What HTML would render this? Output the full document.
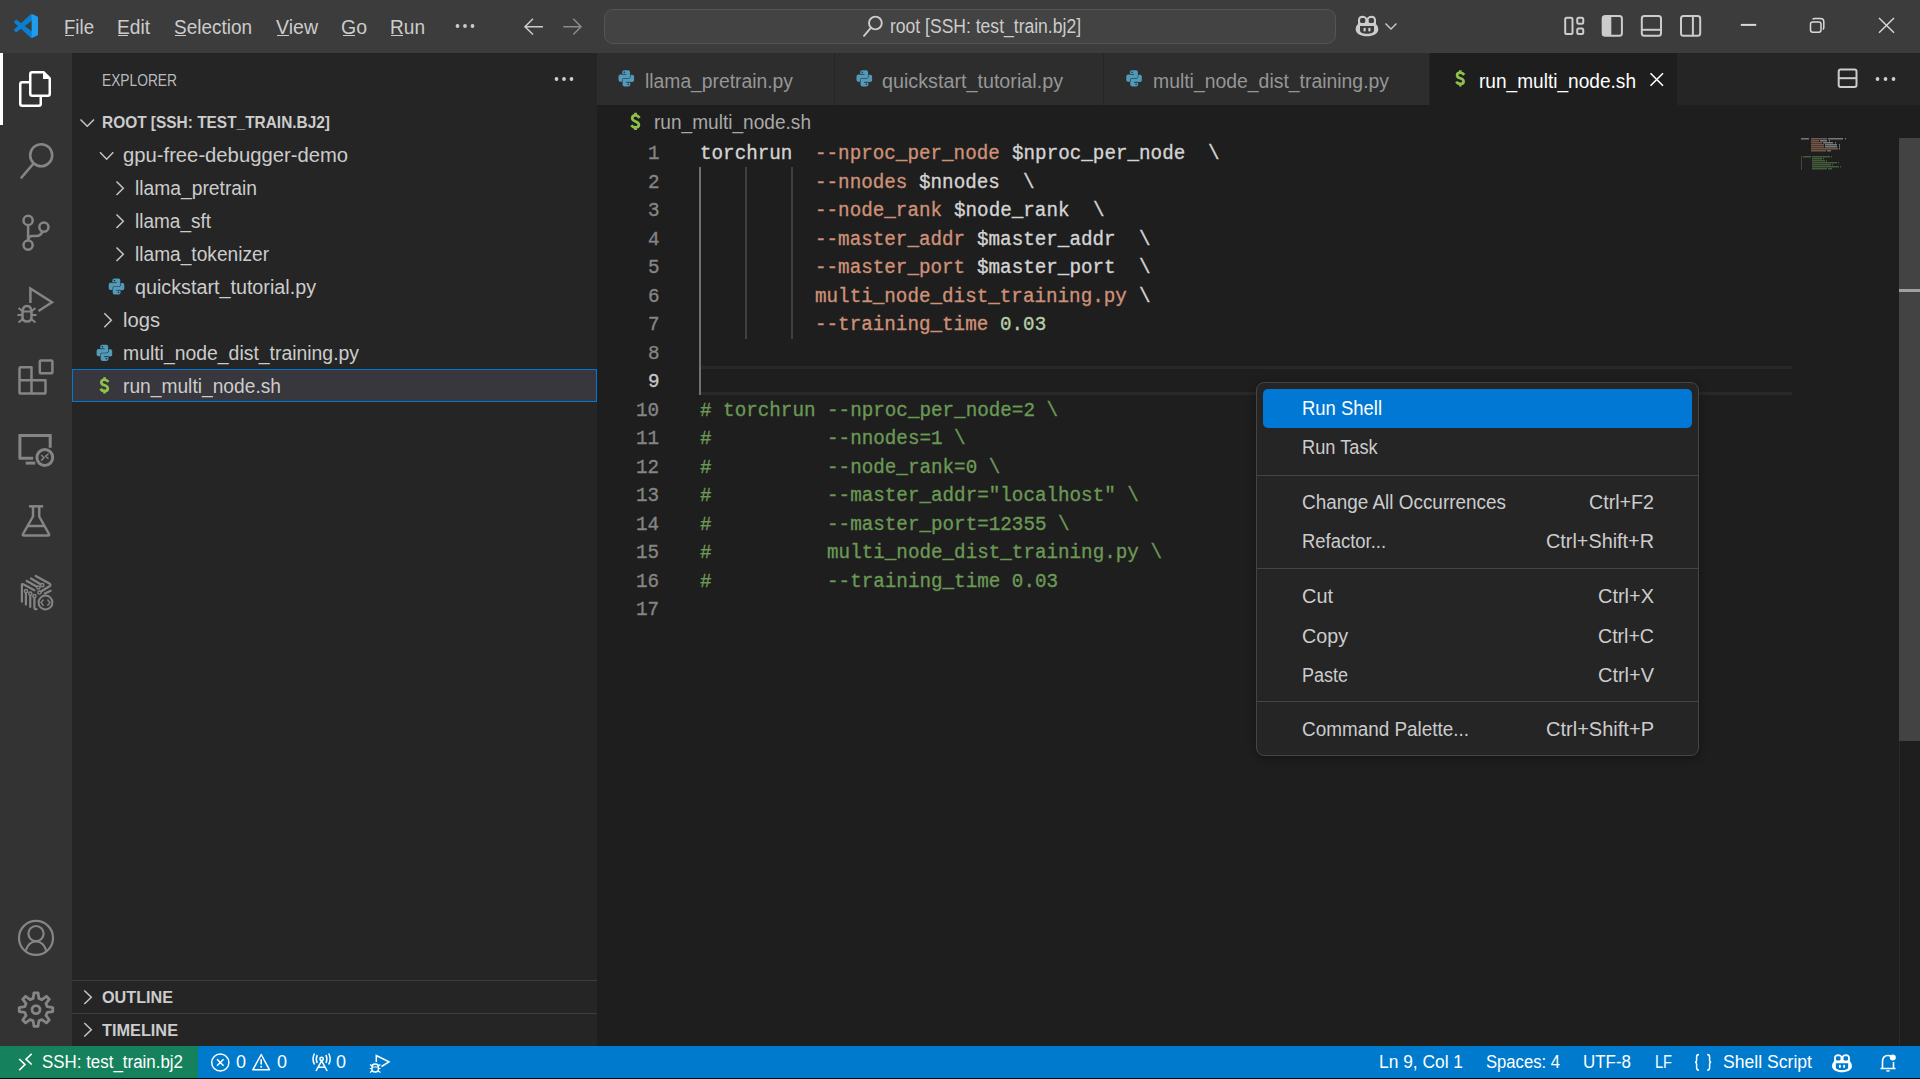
<!DOCTYPE html>
<html><head><meta charset="utf-8"><style>
html,body{margin:0;padding:0;width:1920px;height:1079px;overflow:hidden;background:#1e1e1e;}
body{position:relative;font-family:'Liberation Sans', sans-serif;}
svg{overflow:visible}
</style></head><body>
<div style="position:absolute;left:0px;top:0px;width:1920px;height:53px;background:#3c3c3c;"></div>
<div style="position:absolute;left:0px;top:53px;width:72px;height:993px;background:#333333;"></div>
<div style="position:absolute;left:72px;top:53px;width:525px;height:993px;background:#252526;"></div>
<div style="position:absolute;left:597px;top:53px;width:1323px;height:993px;background:#1e1e1e;"></div>
<div style="position:absolute;left:597px;top:53px;width:1323px;height:52px;background:#252526;"></div>
<div style="position:absolute;left:0px;top:1046px;width:1920px;height:33px;background:#007acc;"></div>
<div style="position:absolute;left:0px;top:1046px;width:198px;height:33px;background:#16825d;"></div>
<div style="position:absolute;left:64px;top:17.69px;font-family:'Liberation Sans', sans-serif;font-size:19.5px;line-height:1;white-space:pre;color:#cccccc;font-weight:400;transform:scaleX(0.9548);transform-origin:0 0;">File</div>
<div style="position:absolute;left:117px;top:17.69px;font-family:'Liberation Sans', sans-serif;font-size:19.5px;line-height:1;white-space:pre;color:#cccccc;font-weight:400;transform:scaleX(0.9821);transform-origin:0 0;">Edit</div>
<div style="position:absolute;left:174px;top:17.69px;font-family:'Liberation Sans', sans-serif;font-size:19.5px;line-height:1;white-space:pre;color:#cccccc;font-weight:400;transform:scaleX(0.9723);transform-origin:0 0;">Selection</div>
<div style="position:absolute;left:276px;top:17.69px;font-family:'Liberation Sans', sans-serif;font-size:19.5px;line-height:1;white-space:pre;color:#cccccc;font-weight:400;transform:scaleX(1.0021);transform-origin:0 0;">View</div>
<div style="position:absolute;left:341px;top:17.69px;font-family:'Liberation Sans', sans-serif;font-size:19.5px;line-height:1;white-space:pre;color:#cccccc;font-weight:400;transform:scaleX(0.9995);transform-origin:0 0;">Go</div>
<div style="position:absolute;left:390px;top:17.69px;font-family:'Liberation Sans', sans-serif;font-size:19.5px;line-height:1;white-space:pre;color:#cccccc;font-weight:400;transform:scaleX(0.9784);transform-origin:0 0;">Run</div>
<div style="position:absolute;left:604px;top:9px;width:732px;height:35px;background:#434343;border:1px solid #555;border-radius:9px;box-sizing:border-box;"></div>
<div style="position:absolute;left:890px;top:16.99px;font-family:'Liberation Sans', sans-serif;font-size:19.5px;line-height:1;white-space:pre;color:#cccccc;font-weight:400;transform:scaleX(0.8991);transform-origin:0 0;">root [SSH: test_train.bj2]</div>
<div style="position:absolute;left:0px;top:53px;width:3px;height:72px;background:#ffffff;"></div>
<div style="position:absolute;left:101.5px;top:72.03px;font-family:'Liberation Sans', sans-serif;font-size:16.5px;line-height:1;white-space:pre;color:#bbbbbb;font-weight:400;transform:scaleX(0.8346);transform-origin:0 0;">EXPLORER</div>
<div style="position:absolute;left:101.5px;top:114.03px;font-family:'Liberation Sans', sans-serif;font-size:16.5px;line-height:1;white-space:pre;color:#cccccc;font-weight:700;transform:scaleX(0.9350);transform-origin:0 0;">ROOT [SSH: TEST_TRAIN.BJ2]</div>
<div style="position:absolute;left:72px;top:369px;width:525px;height:33px;background:#37373d;border:1px solid #0078d4;box-sizing:border-box;"></div>
<div style="position:absolute;left:123px;top:146.29px;font-family:'Liberation Sans', sans-serif;font-size:19.5px;line-height:1;white-space:pre;color:#cccccc;font-weight:400;transform:scaleX(1.0378);transform-origin:0 0;">gpu-free-debugger-demo</div>
<div style="position:absolute;left:135px;top:179.29px;font-family:'Liberation Sans', sans-serif;font-size:19.5px;line-height:1;white-space:pre;color:#cccccc;font-weight:400;transform:scaleX(0.9874);transform-origin:0 0;">llama_pretrain</div>
<div style="position:absolute;left:135px;top:212.29px;font-family:'Liberation Sans', sans-serif;font-size:19.5px;line-height:1;white-space:pre;color:#cccccc;font-weight:400;transform:scaleX(0.9740);transform-origin:0 0;">llama_sft</div>
<div style="position:absolute;left:135px;top:245.29px;font-family:'Liberation Sans', sans-serif;font-size:19.5px;line-height:1;white-space:pre;color:#cccccc;font-weight:400;transform:scaleX(0.9812);transform-origin:0 0;">llama_tokenizer</div>
<div style="position:absolute;left:135px;top:278.29px;font-family:'Liberation Sans', sans-serif;font-size:19.5px;line-height:1;white-space:pre;color:#cccccc;font-weight:400;transform:scaleX(1.0121);transform-origin:0 0;">quickstart_tutorial.py</div>
<div style="position:absolute;left:123px;top:311.29px;font-family:'Liberation Sans', sans-serif;font-size:19.5px;line-height:1;white-space:pre;color:#cccccc;font-weight:400;transform:scaleX(1.0343);transform-origin:0 0;">logs</div>
<div style="position:absolute;left:123px;top:344.29px;font-family:'Liberation Sans', sans-serif;font-size:19.5px;line-height:1;white-space:pre;color:#cccccc;font-weight:400;transform:scaleX(0.9941);transform-origin:0 0;">multi_node_dist_training.py</div>
<div style="position:absolute;left:123px;top:377.29px;font-family:'Liberation Sans', sans-serif;font-size:19.5px;line-height:1;white-space:pre;color:#cccccc;font-weight:400;transform:scaleX(0.9848);transform-origin:0 0;">run_multi_node.sh</div>
<div style="position:absolute;left:72px;top:980px;width:525px;height:1px;background:#3c3c3c;"></div>
<div style="position:absolute;left:72px;top:1013px;width:525px;height:1px;background:#3c3c3c;"></div>
<div style="position:absolute;left:101.5px;top:989.03px;font-family:'Liberation Sans', sans-serif;font-size:16.5px;line-height:1;white-space:pre;color:#cccccc;font-weight:700;transform:scaleX(0.9805);transform-origin:0 0;">OUTLINE</div>
<div style="position:absolute;left:101.5px;top:1022.03px;font-family:'Liberation Sans', sans-serif;font-size:16.5px;line-height:1;white-space:pre;color:#cccccc;font-weight:700;transform:scaleX(0.9870);transform-origin:0 0;">TIMELINE</div>
<div style="position:absolute;left:597px;top:53px;width:238px;height:52px;background:#2d2d2d;border-right:1px solid #252526;box-sizing:border-box;"></div>
<div style="position:absolute;left:835px;top:53px;width:269px;height:52px;background:#2d2d2d;border-right:1px solid #252526;box-sizing:border-box;"></div>
<div style="position:absolute;left:1104px;top:53px;width:326px;height:52px;background:#2d2d2d;border-right:1px solid #252526;box-sizing:border-box;"></div>
<div style="position:absolute;left:1430px;top:53px;width:247px;height:52px;background:#1e1e1e;"></div>
<div style="position:absolute;left:645px;top:71.99px;font-family:'Liberation Sans', sans-serif;font-size:19.5px;line-height:1;white-space:pre;color:#969696;font-weight:400;transform:scaleX(0.9895);transform-origin:0 0;">llama_pretrain.py</div>
<div style="position:absolute;left:882px;top:71.99px;font-family:'Liberation Sans', sans-serif;font-size:19.5px;line-height:1;white-space:pre;color:#969696;font-weight:400;transform:scaleX(1.0121);transform-origin:0 0;">quickstart_tutorial.py</div>
<div style="position:absolute;left:1153px;top:71.99px;font-family:'Liberation Sans', sans-serif;font-size:19.5px;line-height:1;white-space:pre;color:#969696;font-weight:400;transform:scaleX(0.9941);transform-origin:0 0;">multi_node_dist_training.py</div>
<div style="position:absolute;left:1478.5px;top:71.99px;font-family:'Liberation Sans', sans-serif;font-size:19.5px;line-height:1;white-space:pre;color:#ffffff;font-weight:400;transform:scaleX(0.9786);transform-origin:0 0;">run_multi_node.sh</div>
<div style="position:absolute;left:654px;top:112.99px;font-family:'Liberation Sans', sans-serif;font-size:19.5px;line-height:1;white-space:pre;color:#a9a9a9;font-weight:400;transform:scaleX(0.9786);transform-origin:0 0;">run_multi_node.sh</div>
<div style="position:absolute;left:701px;top:366px;width:1091px;height:28.8px;background:transparent;border-top:3px solid #282828;border-bottom:3px solid #282828;box-sizing:border-box;"></div>
<div style="position:absolute;left:745px;top:167.0px;width:1.6px;height:29.0px;background:#404040;"></div>
<div style="position:absolute;left:791px;top:167.0px;width:1.6px;height:29.0px;background:#404040;"></div>
<div style="position:absolute;left:745px;top:195.5px;width:1.6px;height:29.0px;background:#404040;"></div>
<div style="position:absolute;left:791px;top:195.5px;width:1.6px;height:29.0px;background:#404040;"></div>
<div style="position:absolute;left:745px;top:224.0px;width:1.6px;height:29.0px;background:#404040;"></div>
<div style="position:absolute;left:791px;top:224.0px;width:1.6px;height:29.0px;background:#404040;"></div>
<div style="position:absolute;left:745px;top:252.5px;width:1.6px;height:29.0px;background:#404040;"></div>
<div style="position:absolute;left:791px;top:252.5px;width:1.6px;height:29.0px;background:#404040;"></div>
<div style="position:absolute;left:745px;top:281.0px;width:1.6px;height:29.0px;background:#404040;"></div>
<div style="position:absolute;left:791px;top:281.0px;width:1.6px;height:29.0px;background:#404040;"></div>
<div style="position:absolute;left:745px;top:309.5px;width:1.6px;height:29.0px;background:#404040;"></div>
<div style="position:absolute;left:791px;top:309.5px;width:1.6px;height:29.0px;background:#404040;"></div>
<div style="position:absolute;left:699px;top:167.0px;width:2px;height:228.0px;background:#707070;"></div>
<div style="position:absolute;left:647.953px;top:144.09px;font-family:'Liberation Mono', monospace;font-size:20.5px;line-height:1;white-space:pre;color:#858585;font-weight:400;transform:scaleX(0.9388);transform-origin:0 0;-webkit-text-stroke:0.35px #858585;">1</div>
<div style="position:absolute;left:700.0px;top:144.09px;font-family:'Liberation Mono', monospace;font-size:20.5px;line-height:1;white-space:pre;color:#d4d4d4;font-weight:400;transform:scaleX(0.9388);transform-origin:0 0;-webkit-text-stroke:0.35px #d4d4d4;">torchrun</div>
<div style="position:absolute;left:815.47px;top:144.09px;font-family:'Liberation Mono', monospace;font-size:20.5px;line-height:1;white-space:pre;color:#ce9178;font-weight:400;transform:scaleX(0.9388);transform-origin:0 0;-webkit-text-stroke:0.35px #ce9178;">--nproc_per_node</div>
<div style="position:absolute;left:1011.769px;top:144.09px;font-family:'Liberation Mono', monospace;font-size:20.5px;line-height:1;white-space:pre;color:#d4d4d4;font-weight:400;transform:scaleX(0.9388);transform-origin:0 0;-webkit-text-stroke:0.35px #d4d4d4;">$nproc_per_node</div>
<div style="position:absolute;left:1208.068px;top:144.09px;font-family:'Liberation Mono', monospace;font-size:20.5px;line-height:1;white-space:pre;color:#d4d4d4;font-weight:400;transform:scaleX(0.9388);transform-origin:0 0;-webkit-text-stroke:0.35px #d4d4d4;">\</div>
<div style="position:absolute;left:647.953px;top:172.59px;font-family:'Liberation Mono', monospace;font-size:20.5px;line-height:1;white-space:pre;color:#858585;font-weight:400;transform:scaleX(0.9388);transform-origin:0 0;-webkit-text-stroke:0.35px #858585;">2</div>
<div style="position:absolute;left:815.47px;top:172.59px;font-family:'Liberation Mono', monospace;font-size:20.5px;line-height:1;white-space:pre;color:#ce9178;font-weight:400;transform:scaleX(0.9388);transform-origin:0 0;-webkit-text-stroke:0.35px #ce9178;">--nnodes</div>
<div style="position:absolute;left:919.393px;top:172.59px;font-family:'Liberation Mono', monospace;font-size:20.5px;line-height:1;white-space:pre;color:#d4d4d4;font-weight:400;transform:scaleX(0.9388);transform-origin:0 0;-webkit-text-stroke:0.35px #d4d4d4;">$nnodes</div>
<div style="position:absolute;left:1023.316px;top:172.59px;font-family:'Liberation Mono', monospace;font-size:20.5px;line-height:1;white-space:pre;color:#d4d4d4;font-weight:400;transform:scaleX(0.9388);transform-origin:0 0;-webkit-text-stroke:0.35px #d4d4d4;">\</div>
<div style="position:absolute;left:647.953px;top:201.09px;font-family:'Liberation Mono', monospace;font-size:20.5px;line-height:1;white-space:pre;color:#858585;font-weight:400;transform:scaleX(0.9388);transform-origin:0 0;-webkit-text-stroke:0.35px #858585;">3</div>
<div style="position:absolute;left:815.47px;top:201.09px;font-family:'Liberation Mono', monospace;font-size:20.5px;line-height:1;white-space:pre;color:#ce9178;font-weight:400;transform:scaleX(0.9388);transform-origin:0 0;-webkit-text-stroke:0.35px #ce9178;">--node_rank</div>
<div style="position:absolute;left:954.034px;top:201.09px;font-family:'Liberation Mono', monospace;font-size:20.5px;line-height:1;white-space:pre;color:#d4d4d4;font-weight:400;transform:scaleX(0.9388);transform-origin:0 0;-webkit-text-stroke:0.35px #d4d4d4;">$node_rank</div>
<div style="position:absolute;left:1092.598px;top:201.09px;font-family:'Liberation Mono', monospace;font-size:20.5px;line-height:1;white-space:pre;color:#d4d4d4;font-weight:400;transform:scaleX(0.9388);transform-origin:0 0;-webkit-text-stroke:0.35px #d4d4d4;">\</div>
<div style="position:absolute;left:647.953px;top:229.59px;font-family:'Liberation Mono', monospace;font-size:20.5px;line-height:1;white-space:pre;color:#858585;font-weight:400;transform:scaleX(0.9388);transform-origin:0 0;-webkit-text-stroke:0.35px #858585;">4</div>
<div style="position:absolute;left:815.47px;top:229.59px;font-family:'Liberation Mono', monospace;font-size:20.5px;line-height:1;white-space:pre;color:#ce9178;font-weight:400;transform:scaleX(0.9388);transform-origin:0 0;-webkit-text-stroke:0.35px #ce9178;">--master_addr</div>
<div style="position:absolute;left:977.128px;top:229.59px;font-family:'Liberation Mono', monospace;font-size:20.5px;line-height:1;white-space:pre;color:#d4d4d4;font-weight:400;transform:scaleX(0.9388);transform-origin:0 0;-webkit-text-stroke:0.35px #d4d4d4;">$master_addr</div>
<div style="position:absolute;left:1138.786px;top:229.59px;font-family:'Liberation Mono', monospace;font-size:20.5px;line-height:1;white-space:pre;color:#d4d4d4;font-weight:400;transform:scaleX(0.9388);transform-origin:0 0;-webkit-text-stroke:0.35px #d4d4d4;">\</div>
<div style="position:absolute;left:647.953px;top:258.09px;font-family:'Liberation Mono', monospace;font-size:20.5px;line-height:1;white-space:pre;color:#858585;font-weight:400;transform:scaleX(0.9388);transform-origin:0 0;-webkit-text-stroke:0.35px #858585;">5</div>
<div style="position:absolute;left:815.47px;top:258.09px;font-family:'Liberation Mono', monospace;font-size:20.5px;line-height:1;white-space:pre;color:#ce9178;font-weight:400;transform:scaleX(0.9388);transform-origin:0 0;-webkit-text-stroke:0.35px #ce9178;">--master_port</div>
<div style="position:absolute;left:977.128px;top:258.09px;font-family:'Liberation Mono', monospace;font-size:20.5px;line-height:1;white-space:pre;color:#d4d4d4;font-weight:400;transform:scaleX(0.9388);transform-origin:0 0;-webkit-text-stroke:0.35px #d4d4d4;">$master_port</div>
<div style="position:absolute;left:1138.786px;top:258.09px;font-family:'Liberation Mono', monospace;font-size:20.5px;line-height:1;white-space:pre;color:#d4d4d4;font-weight:400;transform:scaleX(0.9388);transform-origin:0 0;-webkit-text-stroke:0.35px #d4d4d4;">\</div>
<div style="position:absolute;left:647.953px;top:286.59px;font-family:'Liberation Mono', monospace;font-size:20.5px;line-height:1;white-space:pre;color:#858585;font-weight:400;transform:scaleX(0.9388);transform-origin:0 0;-webkit-text-stroke:0.35px #858585;">6</div>
<div style="position:absolute;left:815.47px;top:286.59px;font-family:'Liberation Mono', monospace;font-size:20.5px;line-height:1;white-space:pre;color:#ce9178;font-weight:400;transform:scaleX(0.9388);transform-origin:0 0;-webkit-text-stroke:0.35px #ce9178;">multi_node_dist_training.py</div>
<div style="position:absolute;left:1138.786px;top:286.59px;font-family:'Liberation Mono', monospace;font-size:20.5px;line-height:1;white-space:pre;color:#d4d4d4;font-weight:400;transform:scaleX(0.9388);transform-origin:0 0;-webkit-text-stroke:0.35px #d4d4d4;">\</div>
<div style="position:absolute;left:647.953px;top:315.09px;font-family:'Liberation Mono', monospace;font-size:20.5px;line-height:1;white-space:pre;color:#858585;font-weight:400;transform:scaleX(0.9388);transform-origin:0 0;-webkit-text-stroke:0.35px #858585;">7</div>
<div style="position:absolute;left:815.47px;top:315.09px;font-family:'Liberation Mono', monospace;font-size:20.5px;line-height:1;white-space:pre;color:#ce9178;font-weight:400;transform:scaleX(0.9388);transform-origin:0 0;-webkit-text-stroke:0.35px #ce9178;">--training_time</div>
<div style="position:absolute;left:1000.222px;top:315.09px;font-family:'Liberation Mono', monospace;font-size:20.5px;line-height:1;white-space:pre;color:#b5cea8;font-weight:400;transform:scaleX(0.9388);transform-origin:0 0;-webkit-text-stroke:0.35px #b5cea8;">0.03</div>
<div style="position:absolute;left:647.953px;top:343.59px;font-family:'Liberation Mono', monospace;font-size:20.5px;line-height:1;white-space:pre;color:#858585;font-weight:400;transform:scaleX(0.9388);transform-origin:0 0;-webkit-text-stroke:0.35px #858585;">8</div>
<div style="position:absolute;left:647.953px;top:372.09px;font-family:'Liberation Mono', monospace;font-size:20.5px;line-height:1;white-space:pre;color:#c6c6c6;font-weight:400;transform:scaleX(0.9388);transform-origin:0 0;-webkit-text-stroke:0.35px #c6c6c6;">9</div>
<div style="position:absolute;left:636.406px;top:400.59px;font-family:'Liberation Mono', monospace;font-size:20.5px;line-height:1;white-space:pre;color:#858585;font-weight:400;transform:scaleX(0.9388);transform-origin:0 0;-webkit-text-stroke:0.35px #858585;">10</div>
<div style="position:absolute;left:700.0px;top:400.59px;font-family:'Liberation Mono', monospace;font-size:20.5px;line-height:1;white-space:pre;color:#6a9955;font-weight:400;transform:scaleX(0.9388);transform-origin:0 0;-webkit-text-stroke:0.35px #6a9955;"># torchrun --nproc_per_node=2 \</div>
<div style="position:absolute;left:636.406px;top:429.09px;font-family:'Liberation Mono', monospace;font-size:20.5px;line-height:1;white-space:pre;color:#858585;font-weight:400;transform:scaleX(0.9388);transform-origin:0 0;-webkit-text-stroke:0.35px #858585;">11</div>
<div style="position:absolute;left:700.0px;top:429.09px;font-family:'Liberation Mono', monospace;font-size:20.5px;line-height:1;white-space:pre;color:#6a9955;font-weight:400;transform:scaleX(0.9388);transform-origin:0 0;-webkit-text-stroke:0.35px #6a9955;">#          --nnodes=1 \</div>
<div style="position:absolute;left:636.406px;top:457.59px;font-family:'Liberation Mono', monospace;font-size:20.5px;line-height:1;white-space:pre;color:#858585;font-weight:400;transform:scaleX(0.9388);transform-origin:0 0;-webkit-text-stroke:0.35px #858585;">12</div>
<div style="position:absolute;left:700.0px;top:457.59px;font-family:'Liberation Mono', monospace;font-size:20.5px;line-height:1;white-space:pre;color:#6a9955;font-weight:400;transform:scaleX(0.9388);transform-origin:0 0;-webkit-text-stroke:0.35px #6a9955;">#          --node_rank=0 \</div>
<div style="position:absolute;left:636.406px;top:486.09px;font-family:'Liberation Mono', monospace;font-size:20.5px;line-height:1;white-space:pre;color:#858585;font-weight:400;transform:scaleX(0.9388);transform-origin:0 0;-webkit-text-stroke:0.35px #858585;">13</div>
<div style="position:absolute;left:700.0px;top:486.09px;font-family:'Liberation Mono', monospace;font-size:20.5px;line-height:1;white-space:pre;color:#6a9955;font-weight:400;transform:scaleX(0.9388);transform-origin:0 0;-webkit-text-stroke:0.35px #6a9955;">#          --master_addr=&quot;localhost&quot; \</div>
<div style="position:absolute;left:636.406px;top:514.59px;font-family:'Liberation Mono', monospace;font-size:20.5px;line-height:1;white-space:pre;color:#858585;font-weight:400;transform:scaleX(0.9388);transform-origin:0 0;-webkit-text-stroke:0.35px #858585;">14</div>
<div style="position:absolute;left:700.0px;top:514.59px;font-family:'Liberation Mono', monospace;font-size:20.5px;line-height:1;white-space:pre;color:#6a9955;font-weight:400;transform:scaleX(0.9388);transform-origin:0 0;-webkit-text-stroke:0.35px #6a9955;">#          --master_port=12355 \</div>
<div style="position:absolute;left:636.406px;top:543.09px;font-family:'Liberation Mono', monospace;font-size:20.5px;line-height:1;white-space:pre;color:#858585;font-weight:400;transform:scaleX(0.9388);transform-origin:0 0;-webkit-text-stroke:0.35px #858585;">15</div>
<div style="position:absolute;left:700.0px;top:543.09px;font-family:'Liberation Mono', monospace;font-size:20.5px;line-height:1;white-space:pre;color:#6a9955;font-weight:400;transform:scaleX(0.9388);transform-origin:0 0;-webkit-text-stroke:0.35px #6a9955;">#          multi_node_dist_training.py \</div>
<div style="position:absolute;left:636.406px;top:571.59px;font-family:'Liberation Mono', monospace;font-size:20.5px;line-height:1;white-space:pre;color:#858585;font-weight:400;transform:scaleX(0.9388);transform-origin:0 0;-webkit-text-stroke:0.35px #858585;">16</div>
<div style="position:absolute;left:700.0px;top:571.59px;font-family:'Liberation Mono', monospace;font-size:20.5px;line-height:1;white-space:pre;color:#6a9955;font-weight:400;transform:scaleX(0.9388);transform-origin:0 0;-webkit-text-stroke:0.35px #6a9955;">#          --training_time 0.03</div>
<div style="position:absolute;left:636.406px;top:600.09px;font-family:'Liberation Mono', monospace;font-size:20.5px;line-height:1;white-space:pre;color:#858585;font-weight:400;transform:scaleX(0.9388);transform-origin:0 0;-webkit-text-stroke:0.35px #858585;">17</div>
<div style="position:absolute;left:1899px;top:138px;width:1px;height:908px;background:#2a2a2a;"></div>
<div style="position:absolute;left:1899px;top:138px;width:21px;height:603px;background:#434343;"></div>
<div style="position:absolute;left:1899px;top:289px;width:21px;height:3px;background:#a0a0a0;"></div>
<div style="position:absolute;left:1256.4px;top:382px;width:442.6px;height:374px;background:#252526;border:1px solid #454545;border-radius:8px;box-sizing:border-box;box-shadow:0 2px 8px rgba(0,0,0,0.36);"></div>
<div style="position:absolute;left:1263px;top:389px;width:429px;height:39px;background:#0078d4;border-radius:5px;"></div>
<div style="position:absolute;left:1301.5px;top:398.69px;font-family:'Liberation Sans', sans-serif;font-size:19.5px;line-height:1;white-space:pre;color:#ffffff;font-weight:400;transform:scaleX(0.9462);transform-origin:0 0;">Run Shell</div>
<div style="position:absolute;left:1301.5px;top:437.99px;font-family:'Liberation Sans', sans-serif;font-size:19.5px;line-height:1;white-space:pre;color:#cccccc;font-weight:400;transform:scaleX(0.9350);transform-origin:0 0;">Run Task</div>
<div style="position:absolute;left:1301.5px;top:493.29px;font-family:'Liberation Sans', sans-serif;font-size:19.5px;line-height:1;white-space:pre;color:#cccccc;font-weight:400;transform:scaleX(0.9700);transform-origin:0 0;">Change All Occurrences</div>
<div style="position:absolute;left:1588.7px;top:493.29px;font-family:'Liberation Sans', sans-serif;font-size:19.5px;line-height:1;white-space:pre;color:#cccccc;font-weight:400;transform:scaleX(1.0082);transform-origin:0 0;">Ctrl+F2</div>
<div style="position:absolute;left:1301.5px;top:532.19px;font-family:'Liberation Sans', sans-serif;font-size:19.5px;line-height:1;white-space:pre;color:#cccccc;font-weight:400;transform:scaleX(0.9452);transform-origin:0 0;">Refactor...</div>
<div style="position:absolute;left:1545.7px;top:532.19px;font-family:'Liberation Sans', sans-serif;font-size:19.5px;line-height:1;white-space:pre;color:#cccccc;font-weight:400;transform:scaleX(1.0169);transform-origin:0 0;">Ctrl+Shift+R</div>
<div style="position:absolute;left:1301.5px;top:587.09px;font-family:'Liberation Sans', sans-serif;font-size:19.5px;line-height:1;white-space:pre;color:#cccccc;font-weight:400;transform:scaleX(1.0216);transform-origin:0 0;">Cut</div>
<div style="position:absolute;left:1597.7px;top:587.09px;font-family:'Liberation Sans', sans-serif;font-size:19.5px;line-height:1;white-space:pre;color:#cccccc;font-weight:400;transform:scaleX(1.0234);transform-origin:0 0;">Ctrl+X</div>
<div style="position:absolute;left:1301.5px;top:626.79px;font-family:'Liberation Sans', sans-serif;font-size:19.5px;line-height:1;white-space:pre;color:#cccccc;font-weight:400;transform:scaleX(1.0105);transform-origin:0 0;">Copy</div>
<div style="position:absolute;left:1597.7px;top:626.79px;font-family:'Liberation Sans', sans-serif;font-size:19.5px;line-height:1;white-space:pre;color:#cccccc;font-weight:400;transform:scaleX(1.0037);transform-origin:0 0;">Ctrl+C</div>
<div style="position:absolute;left:1301.5px;top:665.69px;font-family:'Liberation Sans', sans-serif;font-size:19.5px;line-height:1;white-space:pre;color:#cccccc;font-weight:400;transform:scaleX(0.9225);transform-origin:0 0;">Paste</div>
<div style="position:absolute;left:1597.7px;top:665.69px;font-family:'Liberation Sans', sans-serif;font-size:19.5px;line-height:1;white-space:pre;color:#cccccc;font-weight:400;transform:scaleX(1.0234);transform-origin:0 0;">Ctrl+V</div>
<div style="position:absolute;left:1301.5px;top:720.49px;font-family:'Liberation Sans', sans-serif;font-size:19.5px;line-height:1;white-space:pre;color:#cccccc;font-weight:400;transform:scaleX(0.9691);transform-origin:0 0;">Command Palette...</div>
<div style="position:absolute;left:1545.7px;top:720.49px;font-family:'Liberation Sans', sans-serif;font-size:19.5px;line-height:1;white-space:pre;color:#cccccc;font-weight:400;transform:scaleX(1.0273);transform-origin:0 0;">Ctrl+Shift+P</div>
<div style="position:absolute;left:1257px;top:474.5px;width:441px;height:1px;background:#454545;"></div>
<div style="position:absolute;left:1257px;top:568px;width:441px;height:1px;background:#454545;"></div>
<div style="position:absolute;left:1257px;top:701px;width:441px;height:1px;background:#454545;"></div>
<div style="position:absolute;left:41.5px;top:1053.26px;font-family:'Liberation Sans', sans-serif;font-size:18px;line-height:1;white-space:pre;color:#ffffff;font-weight:400;transform:scaleX(0.9395);transform-origin:0 0;">SSH: test_train.bj2</div>
<div style="position:absolute;left:236px;top:1053.26px;font-family:'Liberation Sans', sans-serif;font-size:18px;line-height:1;white-space:pre;color:#ffffff;font-weight:400;">0</div>
<div style="position:absolute;left:277px;top:1053.26px;font-family:'Liberation Sans', sans-serif;font-size:18px;line-height:1;white-space:pre;color:#ffffff;font-weight:400;">0</div>
<div style="position:absolute;left:336px;top:1053.26px;font-family:'Liberation Sans', sans-serif;font-size:18px;line-height:1;white-space:pre;color:#ffffff;font-weight:400;">0</div>
<div style="position:absolute;left:1378.5px;top:1053.26px;font-family:'Liberation Sans', sans-serif;font-size:18px;line-height:1;white-space:pre;color:#ffffff;font-weight:400;transform:scaleX(0.9649);transform-origin:0 0;">Ln 9, Col 1</div>
<div style="position:absolute;left:1485.5px;top:1053.26px;font-family:'Liberation Sans', sans-serif;font-size:18px;line-height:1;white-space:pre;color:#ffffff;font-weight:400;transform:scaleX(0.9244);transform-origin:0 0;">Spaces: 4</div>
<div style="position:absolute;left:1582.5px;top:1053.26px;font-family:'Liberation Sans', sans-serif;font-size:18px;line-height:1;white-space:pre;color:#ffffff;font-weight:400;transform:scaleX(0.9413);transform-origin:0 0;">UTF-8</div>
<div style="position:absolute;left:1654.5px;top:1053.26px;font-family:'Liberation Sans', sans-serif;font-size:18px;line-height:1;white-space:pre;color:#ffffff;font-weight:400;transform:scaleX(0.8093);transform-origin:0 0;">LF</div>
<div style="position:absolute;left:1722.5px;top:1053.26px;font-family:'Liberation Sans', sans-serif;font-size:18px;line-height:1;white-space:pre;color:#ffffff;font-weight:400;transform:scaleX(0.9776);transform-origin:0 0;">Shell Script</div>
<svg style="position:absolute;left:0;top:0;" width="1920" height="1079" viewBox="0 0 1920 1079"><g transform="translate(14,14) scale(0.24)"><path fill="#0a7fd0" d="M96.46 10.8L75.86.87a6.23 6.23 0 00-7.1 1.2L29.33 38.06 12.15 25a4.16 4.16 0 00-5.31.24l-5.5 5a4.16 4.16 0 000 6.16L16.23 50 1.33 63.6a4.16 4.16 0 000 6.16l5.5 5a4.16 4.16 0 005.31.24l17.18-13.05 39.43 35.97a6.23 6.23 0 007.1 1.2l20.6-9.92a6.25 6.25 0 003.54-5.63V16.43a6.25 6.25 0 00-3.54-5.63zM75 72.7L45.11 50 75 27.3z"/><path fill="#1f9cf0" d="M73.5 1.5L75.86.87l20.6 9.93a6.25 6.25 0 013.54 5.63v67.14a6.25 6.25 0 01-3.54 5.63l-20.6 9.92-2.36.63z"/></g><circle cx="457.5" cy="26" r="1.9" fill="#cccccc"/><circle cx="465" cy="26" r="1.9" fill="#cccccc"/><circle cx="472.5" cy="26" r="1.9" fill="#cccccc"/><path d="M543 26.75H525M533 18.8L525 26.75L533 34.5" stroke="#cccccc" stroke-width="1.5" fill="none"/><path d="M563.3 26.75H581M573.3 18.8L581 26.75L573.3 34.5" stroke="#8b8b8b" stroke-width="1.5" fill="none"/><circle cx="875.4" cy="23" r="6.4" stroke="#cccccc" stroke-width="1.9" fill="none"/><path d="M870.6 28.2L864 35.8" stroke="#cccccc" stroke-width="1.9" stroke-linecap="round"/><g transform="translate(1354.5,15) scale(1.0)"><path d="M1.2 14.5C1.2 10.5 3.5 9.2 3.5 9.2V5C3.5 2.3 5.5 0.8 8 0.8C10.2 0.8 11.6 1.8 12.5 3.2C13.4 1.8 14.8 0.8 17 0.8C19.5 0.8 21.5 2.3 21.5 5V9.2C21.5 9.2 23.8 10.5 23.8 14.5C23.8 18.8 18.5 21.3 12.5 21.3C6.5 21.3 1.2 18.8 1.2 14.5Z" fill="#cccccc"/><rect x="5.6" y="3" width="5.2" height="5" rx="1.6" fill="#3c3c3c"/><rect x="14.2" y="3" width="5.2" height="5" rx="1.6" fill="#3c3c3c"/><path d="M5.5 11H19.5V15.5C19.5 17.5 16.5 18.8 12.5 18.8C8.5 18.8 5.5 17.5 5.5 15.5Z" fill="#3c3c3c"/><rect x="9" y="12.8" width="2.2" height="3.6" rx="1" fill="#cccccc"/><rect x="13.8" y="12.8" width="2.2" height="3.6" rx="1" fill="#cccccc"/></g><path d="M1385.5 23.5L1391 29L1396.5 23.5" stroke="#cccccc" stroke-width="1.4" fill="none"/><rect x="1565.2" y="17.75" width="7.3" height="16.3" rx="1.6" stroke="#cccccc" stroke-width="2" fill="none"/><rect x="1577.25" y="17.75" width="6" height="6" rx="1.5" stroke="#cccccc" stroke-width="2" fill="none"/><rect x="1577.25" y="28.6" width="6" height="5.4" rx="1.5" stroke="#cccccc" stroke-width="2" fill="none"/><rect x="1602.7" y="16.1" width="19.2" height="19.65" rx="2.5" stroke="#cccccc" stroke-width="2" fill="none"/><rect x="1602.7" y="16.1" width="8.6" height="19.65" fill="#cccccc"/><rect x="1641.8" y="16.1" width="19.2" height="19.65" rx="2.5" stroke="#cccccc" stroke-width="2" fill="none"/><path d="M1641.8 29.8H1661" stroke="#cccccc" stroke-width="2"/><rect x="1681" y="16.1" width="19.2" height="19.65" rx="2.5" stroke="#cccccc" stroke-width="2" fill="none"/><path d="M1692.9 16.1V35.75" stroke="#cccccc" stroke-width="2"/><path d="M1740.8 24.9H1756.2" stroke="#d9d9d9" stroke-width="2"/><rect x="1810.5" y="21.9" width="10.5" height="10.3" rx="2.2" stroke="#d9d9d9" stroke-width="1.5" fill="none"/><path d="M1812.5 19.2C1813.2 18.6 1814 18.4 1815 18.4H1820.5C1822.5 18.4 1823.8 19.7 1823.8 21.7V27.2C1823.8 28.2 1823.5 29 1823 29.6" stroke="#d9d9d9" stroke-width="1.5" fill="none"/><path d="M1879 18.1L1894 32.8M1894 18.1L1879 32.8" stroke="#d9d9d9" stroke-width="1.4"/></svg>
<svg style="position:absolute;left:0;top:0;" width="1920" height="1079" viewBox="0 0 1920 1079"><g stroke="#ffffff" stroke-width="2.5" fill="none" stroke-linejoin="round"><path d="M30.25 82.25H22.25Q20.25 82.25 20.25 84.25V103.75Q20.25 105.75 22.25 105.75H38.75Q40.75 105.75 40.75 103.75V96"/><path d="M32.25 72.25H43.5L49.75 78.5V93.75Q49.75 95.75 47.75 95.75H32.25Q30.25 95.75 30.25 93.75V74.25Q30.25 72.25 32.25 72.25Z"/></g><path d="M43 72.5L49.5 79H43Z" fill="#ffffff"/><g stroke="#858585" stroke-width="2.6" fill="none"><circle cx="41.2" cy="155.2" r="11"/><path d="M33.2 163.8L21.5 177.5" stroke-linecap="round"/></g><g stroke="#858585" stroke-width="2.5" fill="none"><circle cx="28.1" cy="220.4" r="4.6"/><circle cx="43.9" cy="227.1" r="4.6"/><circle cx="28.1" cy="245.1" r="4.6"/><path d="M28.1 225V240.5"/><path d="M42.5 231.5Q41 236 36 236H32Q28.8 236 28.3 239.5"/></g><g stroke="#858585" stroke-width="2.5" fill="none" stroke-linejoin="miter"><path d="M30.4 303.1V288.5L52 302.2L38.5 311"/><path d="M22.5 321V312.5Q22.5 306 27 306Q31.5 306 31.5 312.5V317Q31.5 321.5 27 321.5Q22.5 321.5 22.5 317Z"/><path d="M22.5 311.5H31.5M18.5 308L22.5 311.2M35.5 308L31.5 311.2M17.5 315H22.5M31.5 315H36.5M18.5 322.5L22.5 319.2M35.5 322.5L31.5 319.2" stroke-width="2"/></g><g stroke="#858585" stroke-width="2.5" fill="none" stroke-linejoin="round"><path d="M19.5 368.5Q19.5 367.2 20.8 367.2H31.5V380.2H45.5V392.2Q45.5 393.5 44.2 393.5H20.8Q19.5 393.5 19.5 392.2Z"/><path d="M19.5 380.2H31.5V393.5"/><rect x="39.8" y="360.6" width="12.6" height="12.6" rx="1.3"/></g><g stroke="#858585" stroke-width="3" fill="none"><path d="M33.2 458.3H20Q19.9 458.3 19.9 458.2V435.5H50.2V447.7"/><path d="M25.7 463.1H35.3"/><circle cx="44.8" cy="457.5" r="7.9"/></g><path d="M41.2 455L44 457.8L41.2 460.6M48.5 453.8L45.6 456.3L48.5 458.8" stroke="#858585" stroke-width="1.5" fill="none"/><g stroke="#858585" stroke-width="2.5" fill="none" stroke-linejoin="round"><path d="M29 506.3H43.2"/><path d="M33 506.3V516.5L23 534Q22.3 535.5 24 535.5H48Q49.7 535.5 49 534L39.2 516.5V506.3"/><path d="M28 526H44.2"/></g><g stroke="#858585" stroke-width="2.2" fill="none" stroke-linecap="round"><path d="M21.9 601.7V585Q21.9 583.5 23.3 584.2L34.4 590.2"/><path d="M26.7 581L38.4 587.5M31 578.5L42.3 585.2M35.7 576L49.8 583.8Q50.7 584.4 50.3 585.8L39.4 592.5"/><path d="M25.9 591V604.6M30.25 593.5V606.9M34.4 596V607.8Q34.4 609.5 36.5 609.2"/><path d="M44.8 593.5L50.7 590.8"/><circle cx="45.5" cy="602.5" r="6.9" stroke-width="2"/><path d="M43.2 600L41 602.6L43.2 605.2M47.8 600L50 602.6L47.8 605.2" stroke-width="1.4"/></g><circle cx="26" cy="591" r="1.6" fill="#333333" stroke="#858585" stroke-width="1.5"/><circle cx="30.25" cy="593.5" r="1.6" fill="#333333" stroke="#858585" stroke-width="1.5"/><circle cx="34.4" cy="596" r="1.6" fill="#333333" stroke="#858585" stroke-width="1.5"/><circle cx="38.4" cy="587.5" r="1.6" fill="#333333" stroke="#858585" stroke-width="1.5"/><circle cx="42.3" cy="585.2" r="1.6" fill="#333333" stroke="#858585" stroke-width="1.5"/><circle cx="39.4" cy="592.5" r="1.6" fill="#333333" stroke="#858585" stroke-width="1.5"/><g stroke="#858585" stroke-width="2.2" fill="none"><circle cx="36" cy="937.9" r="17"/><circle cx="36" cy="933.6" r="7.6"/><path d="M25.5 951Q28.5 941.5 36 941.5Q43.5 941.5 46.5 951"/></g><path d="M33.13 998.36 L33.98 992.82 L38.02 992.82 L38.87 998.36 L41.92 999.62 L46.43 996.31 L49.29 999.17 L45.98 1003.68 L47.24 1006.73 L52.78 1007.58 L52.78 1011.62 L47.24 1012.47 L45.98 1015.52 L49.29 1020.03 L46.43 1022.89 L41.92 1019.58 L38.87 1020.84 L38.02 1026.38 L33.98 1026.38 L33.13 1020.84 L30.08 1019.58 L25.57 1022.89 L22.71 1020.03 L26.02 1015.52 L24.76 1012.47 L19.22 1011.62 L19.22 1007.58 L24.76 1006.73 L26.02 1003.68 L22.71 999.17 L25.57 996.31 L30.08 999.62Z" stroke="#858585" stroke-width="2.8" fill="none" stroke-linejoin="round"/><circle cx="36" cy="1009.6" r="4" stroke="#858585" stroke-width="2.8" fill="none"/></svg>
<svg style="position:absolute;left:0;top:0;" width="1920" height="1079" viewBox="0 0 1920 1079"><path d="M80.5 119.5L87.25 126.3L94 119.5" stroke="#c5c5c5" stroke-width="1.5" fill="none"/><path d="M100 152.3L106.65 159.2L113.3 152.3" stroke="#c5c5c5" stroke-width="1.5" fill="none"/><path d="M116.5 181.5L123.3 188.25L116.5 195" stroke="#c5c5c5" stroke-width="1.5" fill="none"/><path d="M116.5 214.5L123.3 221.25L116.5 228" stroke="#c5c5c5" stroke-width="1.5" fill="none"/><path d="M116.5 247.5L123.3 254.25L116.5 261" stroke="#c5c5c5" stroke-width="1.5" fill="none"/><path d="M104.3 313.3L111.3 320.3L104.3 327.3" stroke="#c5c5c5" stroke-width="1.5" fill="none"/><path d="M84.3 990.5L91.3 997.25L84.3 1004" stroke="#c5c5c5" stroke-width="1.5" fill="none"/><path d="M84.3 1023L91.3 1029.75L84.3 1036.5" stroke="#c5c5c5" stroke-width="1.5" fill="none"/><circle cx="556.5" cy="79" r="1.9" fill="#cccccc"/><circle cx="564" cy="79" r="1.9" fill="#cccccc"/><circle cx="571.5" cy="79" r="1.9" fill="#cccccc"/><g transform="translate(104.3,274.2)"><path d="M10 4.2H14.2Q16 4.2 16 6V10.5Q16 12.3 14.2 12.3H9.6Q8.3 12.3 8.3 13.6V15.8H6.2Q4.4 15.8 4.4 14V10.4Q4.4 8.6 6.2 8.6H12.2V8.2H8.1V6Q8.1 4.2 10 4.2Z" fill="#519aba" transform="rotate(180 12.2 12.3)"/><path d="M10 4.2H14.2Q16 4.2 16 6V10.5Q16 12.3 14.2 12.3H9.6Q8.3 12.3 8.3 13.6V15.8H6.2Q4.4 15.8 4.4 14V10.4Q4.4 8.6 6.2 8.6H12.2V8.2H8.1V6Q8.1 4.2 10 4.2Z" fill="#519aba" stroke="#252526" stroke-width="0.9" paint-order="stroke"/><path d="M8 8.4H12.3" stroke="#252526" stroke-width="0.6"/><path d="M8 8.4H12.3" stroke="#252526" stroke-width="0.6" transform="rotate(180 12.2 12.3)"/><circle cx="10.2" cy="6.3" r="0.8" fill="#252526"/><circle cx="14.2" cy="18.3" r="0.8" fill="#252526"/></g><g transform="translate(92.2,340.5)"><path d="M10 4.2H14.2Q16 4.2 16 6V10.5Q16 12.3 14.2 12.3H9.6Q8.3 12.3 8.3 13.6V15.8H6.2Q4.4 15.8 4.4 14V10.4Q4.4 8.6 6.2 8.6H12.2V8.2H8.1V6Q8.1 4.2 10 4.2Z" fill="#519aba" transform="rotate(180 12.2 12.3)"/><path d="M10 4.2H14.2Q16 4.2 16 6V10.5Q16 12.3 14.2 12.3H9.6Q8.3 12.3 8.3 13.6V15.8H6.2Q4.4 15.8 4.4 14V10.4Q4.4 8.6 6.2 8.6H12.2V8.2H8.1V6Q8.1 4.2 10 4.2Z" fill="#519aba" stroke="#252526" stroke-width="0.9" paint-order="stroke"/><path d="M8 8.4H12.3" stroke="#252526" stroke-width="0.6"/><path d="M8 8.4H12.3" stroke="#252526" stroke-width="0.6" transform="rotate(180 12.2 12.3)"/><circle cx="10.2" cy="6.3" r="0.8" fill="#252526"/><circle cx="14.2" cy="18.3" r="0.8" fill="#252526"/></g><g transform="translate(614.1,66)"><path d="M10 4.2H14.2Q16 4.2 16 6V10.5Q16 12.3 14.2 12.3H9.6Q8.3 12.3 8.3 13.6V15.8H6.2Q4.4 15.8 4.4 14V10.4Q4.4 8.6 6.2 8.6H12.2V8.2H8.1V6Q8.1 4.2 10 4.2Z" fill="#519aba" transform="rotate(180 12.2 12.3)"/><path d="M10 4.2H14.2Q16 4.2 16 6V10.5Q16 12.3 14.2 12.3H9.6Q8.3 12.3 8.3 13.6V15.8H6.2Q4.4 15.8 4.4 14V10.4Q4.4 8.6 6.2 8.6H12.2V8.2H8.1V6Q8.1 4.2 10 4.2Z" fill="#519aba" stroke="#2d2d2d" stroke-width="0.9" paint-order="stroke"/><path d="M8 8.4H12.3" stroke="#2d2d2d" stroke-width="0.6"/><path d="M8 8.4H12.3" stroke="#2d2d2d" stroke-width="0.6" transform="rotate(180 12.2 12.3)"/><circle cx="10.2" cy="6.3" r="0.8" fill="#2d2d2d"/><circle cx="14.2" cy="18.3" r="0.8" fill="#2d2d2d"/></g><g transform="translate(852.1,66)"><path d="M10 4.2H14.2Q16 4.2 16 6V10.5Q16 12.3 14.2 12.3H9.6Q8.3 12.3 8.3 13.6V15.8H6.2Q4.4 15.8 4.4 14V10.4Q4.4 8.6 6.2 8.6H12.2V8.2H8.1V6Q8.1 4.2 10 4.2Z" fill="#519aba" transform="rotate(180 12.2 12.3)"/><path d="M10 4.2H14.2Q16 4.2 16 6V10.5Q16 12.3 14.2 12.3H9.6Q8.3 12.3 8.3 13.6V15.8H6.2Q4.4 15.8 4.4 14V10.4Q4.4 8.6 6.2 8.6H12.2V8.2H8.1V6Q8.1 4.2 10 4.2Z" fill="#519aba" stroke="#2d2d2d" stroke-width="0.9" paint-order="stroke"/><path d="M8 8.4H12.3" stroke="#2d2d2d" stroke-width="0.6"/><path d="M8 8.4H12.3" stroke="#2d2d2d" stroke-width="0.6" transform="rotate(180 12.2 12.3)"/><circle cx="10.2" cy="6.3" r="0.8" fill="#2d2d2d"/><circle cx="14.2" cy="18.3" r="0.8" fill="#2d2d2d"/></g><g transform="translate(1121.85,66)"><path d="M10 4.2H14.2Q16 4.2 16 6V10.5Q16 12.3 14.2 12.3H9.6Q8.3 12.3 8.3 13.6V15.8H6.2Q4.4 15.8 4.4 14V10.4Q4.4 8.6 6.2 8.6H12.2V8.2H8.1V6Q8.1 4.2 10 4.2Z" fill="#519aba" transform="rotate(180 12.2 12.3)"/><path d="M10 4.2H14.2Q16 4.2 16 6V10.5Q16 12.3 14.2 12.3H9.6Q8.3 12.3 8.3 13.6V15.8H6.2Q4.4 15.8 4.4 14V10.4Q4.4 8.6 6.2 8.6H12.2V8.2H8.1V6Q8.1 4.2 10 4.2Z" fill="#519aba" stroke="#2d2d2d" stroke-width="0.9" paint-order="stroke"/><path d="M8 8.4H12.3" stroke="#2d2d2d" stroke-width="0.6"/><path d="M8 8.4H12.3" stroke="#2d2d2d" stroke-width="0.6" transform="rotate(180 12.2 12.3)"/><circle cx="10.2" cy="6.3" r="0.8" fill="#2d2d2d"/><circle cx="14.2" cy="18.3" r="0.8" fill="#2d2d2d"/></g><path d="M1650.5 73.3L1663 85.8M1663 73.3L1650.5 85.8" stroke="#ffffff" stroke-width="1.6"/><rect x="1838.7" y="69.4" width="17.8" height="17.6" rx="2" stroke="#cccccc" stroke-width="2" fill="none"/><path d="M1838.7 78.2H1856.5" stroke="#cccccc" stroke-width="2"/><circle cx="1877.5" cy="79" r="1.9" fill="#cccccc"/><circle cx="1885.5" cy="79" r="1.9" fill="#cccccc"/><circle cx="1893.5" cy="79" r="1.9" fill="#cccccc"/></svg>
<svg style="position:absolute;left:0;top:0;" width="1920" height="1079" viewBox="0 0 1920 1079"><path d="M639.54 117.82Q637.83 115.48 635.55 115.48Q632.22 115.48 632.22 118.34Q632.22 120.24 635.55 121.45Q638.88 122.66 638.88 124.74Q638.88 127.42 635.55 127.42Q632.70 127.42 631.46 125.08M635.55 112.80V115.74M635.55 127.16V130.10" stroke="#8dc149" stroke-width="2.75" fill="none"/><path d="M108.46 381.93Q106.78 379.73 104.55 379.73Q101.30 379.73 101.30 382.42Q101.30 384.21 104.55 385.35Q107.81 386.49 107.81 388.45Q107.81 390.97 104.55 390.97Q101.76 390.97 100.55 388.77M104.55 377.20V379.97M104.55 390.73V393.50" stroke="#8dc149" stroke-width="2.70" fill="none"/><path d="M1464.26 74.90Q1462.58 72.71 1460.35 72.71Q1457.10 72.71 1457.10 75.38Q1457.10 77.17 1460.35 78.30Q1463.61 79.43 1463.61 81.38Q1463.61 83.89 1460.35 83.89Q1457.56 83.89 1456.35 81.70M1460.35 70.20V72.95M1460.35 83.65V86.40" stroke="#8dc149" stroke-width="2.70" fill="none"/></svg>
<div style="position:absolute;left:64.5px;top:34.6px;width:9.5px;height:1.4px;background:#cccccc;"></div>
<div style="position:absolute;left:118px;top:34.6px;width:10px;height:1.4px;background:#cccccc;"></div>
<div style="position:absolute;left:174.5px;top:34.6px;width:11.0px;height:1.4px;background:#cccccc;"></div>
<div style="position:absolute;left:277px;top:34.6px;width:12px;height:1.4px;background:#cccccc;"></div>
<div style="position:absolute;left:342.5px;top:34.6px;width:12.5px;height:1.4px;background:#cccccc;"></div>
<div style="position:absolute;left:391px;top:34.6px;width:11.5px;height:1.4px;background:#cccccc;"></div>
<svg style="position:absolute;left:0;top:0;" width="1920" height="1079" viewBox="0 0 1920 1079"><path d="M19.2 1059L25 1064.6L19.2 1070.3M31.7 1053.9L26 1059.2L31.7 1064.5" stroke="#ffffff" stroke-width="1.6" fill="none"/><circle cx="220.3" cy="1062.5" r="8.6" stroke="#ffffff" stroke-width="1.5" fill="none"/><path d="M217 1059.2L223.6 1065.8M223.6 1059.2L217 1065.8" stroke="#ffffff" stroke-width="1.5"/><path d="M261.2 1054.5L269.5 1069.8H252.8Z" stroke="#ffffff" stroke-width="1.5" fill="none" stroke-linejoin="round"/><path d="M261.2 1059.3V1064.6" stroke="#ffffff" stroke-width="1.6"/><circle cx="261.2" cy="1066.8" r="0.95" fill="#ffffff"/><g stroke="#ffffff" stroke-width="1.5" fill="none"><circle cx="321.6" cy="1059" r="1.7"/><path d="M316 1071L321.6 1060.8L327.2 1071M318 1067.2H325.2"/><path d="M317.2 1055Q315.4 1059 317.2 1063M326 1055Q327.8 1059 326 1063M314.5 1053.5Q311.5 1059 314.5 1064.5M328.7 1053.5Q331.7 1059 328.7 1064.5"/></g><g stroke="#ffffff" stroke-width="1.5" fill="none"><path d="M376.3 1062V1055.5L389 1061.8L381.5 1066.5"/><path d="M372 1071.5V1066.5Q372 1064 375.2 1064Q378.4 1064 378.4 1066.5V1069.5Q378.4 1072 375.2 1072Q372 1072 372 1069.5Z"/><path d="M372 1067H378.4M370 1064.5L372 1066M380.4 1064.5L378.4 1066M369.8 1068.5H372M378.4 1068.5H380.6M370 1072.5L372 1071M380.4 1072.5L378.4 1071" stroke-width="1.2"/></g><path d="M1699 1054.5Q1696.6 1054.5 1696.6 1057V1060.5Q1696.6 1062.3 1695 1062.3Q1696.6 1062.3 1696.6 1064.1V1067.8Q1696.6 1070.2 1699 1070.2" stroke="#ffffff" stroke-width="1.5" fill="none"/><path d="M1707.2 1054.5Q1709.6 1054.5 1709.6 1057V1060.5Q1709.6 1062.3 1711.2 1062.3Q1709.6 1062.3 1709.6 1064.1V1067.8Q1709.6 1070.2 1707.2 1070.2" stroke="#ffffff" stroke-width="1.5" fill="none"/><g transform="translate(1831,1053.5) scale(0.88)"><path d="M1.2 14.5C1.2 10.5 3.5 9.2 3.5 9.2V5C3.5 2.3 5.5 0.8 8 0.8C10.2 0.8 11.6 1.8 12.5 3.2C13.4 1.8 14.8 0.8 17 0.8C19.5 0.8 21.5 2.3 21.5 5V9.2C21.5 9.2 23.8 10.5 23.8 14.5C23.8 18.8 18.5 21.3 12.5 21.3C6.5 21.3 1.2 18.8 1.2 14.5Z" fill="#ffffff"/><rect x="5.6" y="3" width="5.2" height="5" rx="1.6" fill="#007acc"/><rect x="14.2" y="3" width="5.2" height="5" rx="1.6" fill="#007acc"/><path d="M5.5 11H19.5V15.5C19.5 17.5 16.5 18.8 12.5 18.8C8.5 18.8 5.5 17.5 5.5 15.5Z" fill="#007acc"/><rect x="9" y="12.8" width="2.2" height="3.6" rx="1" fill="#ffffff"/><rect x="13.8" y="12.8" width="2.2" height="3.6" rx="1" fill="#ffffff"/></g><path d="M1880.5 1068.5H1895.5M1882.5 1068.5V1062Q1882.5 1055.5 1888 1055.5Q1890 1055.5 1891 1056.3M1893.5 1062V1068.5" stroke="#ffffff" stroke-width="1.6" fill="none"/><path d="M1886 1070.2Q1886 1071.8 1888 1071.8Q1890 1071.8 1890 1070.2Z" fill="#ffffff"/><circle cx="1892.8" cy="1057.4" r="3" fill="#ffffff"/></svg>
<div style="position:absolute;left:0px;top:1078px;width:1920px;height:1px;background:#0b0b0b;"></div>
<svg style="position:absolute;left:0;top:0;" width="1920" height="1079" viewBox="0 0 1920 1079"><rect x="1801.0" y="138.0" width="8.0" height="1.5" fill="#d4d4d4" opacity="0.5"/><rect x="1811.0" y="138.0" width="16.0" height="1.5" fill="#ce9178" opacity="0.5"/><rect x="1828.0" y="138.0" width="15.0" height="1.5" fill="#d4d4d4" opacity="0.5"/><rect x="1845.0" y="138.0" width="1.0" height="1.5" fill="#d4d4d4" opacity="0.5"/><rect x="1811.0" y="140.0" width="8.0" height="1.5" fill="#ce9178" opacity="0.5"/><rect x="1820.0" y="140.0" width="7.0" height="1.5" fill="#d4d4d4" opacity="0.5"/><rect x="1829.0" y="140.0" width="1.0" height="1.5" fill="#d4d4d4" opacity="0.5"/><rect x="1811.0" y="142.0" width="11.0" height="1.5" fill="#ce9178" opacity="0.5"/><rect x="1823.0" y="142.0" width="10.0" height="1.5" fill="#d4d4d4" opacity="0.5"/><rect x="1835.0" y="142.0" width="1.0" height="1.5" fill="#d4d4d4" opacity="0.5"/><rect x="1811.0" y="144.0" width="13.0" height="1.5" fill="#ce9178" opacity="0.5"/><rect x="1825.0" y="144.0" width="12.0" height="1.5" fill="#d4d4d4" opacity="0.5"/><rect x="1839.0" y="144.0" width="1.0" height="1.5" fill="#d4d4d4" opacity="0.5"/><rect x="1811.0" y="146.0" width="13.0" height="1.5" fill="#ce9178" opacity="0.5"/><rect x="1825.0" y="146.0" width="12.0" height="1.5" fill="#d4d4d4" opacity="0.5"/><rect x="1839.0" y="146.0" width="1.0" height="1.5" fill="#d4d4d4" opacity="0.5"/><rect x="1811.0" y="148.0" width="27.0" height="1.5" fill="#ce9178" opacity="0.5"/><rect x="1839.0" y="148.0" width="1.0" height="1.5" fill="#d4d4d4" opacity="0.5"/><rect x="1811.0" y="150.0" width="15.0" height="1.5" fill="#ce9178" opacity="0.5"/><rect x="1827.0" y="150.0" width="4.0" height="1.5" fill="#b5cea8" opacity="0.5"/><rect x="1801.0" y="156.0" width="1.0" height="1.5" fill="#6a9955" opacity="0.5"/><rect x="1803.0" y="156.0" width="8.0" height="1.5" fill="#6a9955" opacity="0.5"/><rect x="1812.0" y="156.0" width="18.0" height="1.5" fill="#6a9955" opacity="0.5"/><rect x="1831.0" y="156.0" width="1.0" height="1.5" fill="#6a9955" opacity="0.5"/><rect x="1801.0" y="158.0" width="1.0" height="1.5" fill="#6a9955" opacity="0.5"/><rect x="1812.0" y="158.0" width="10.0" height="1.5" fill="#6a9955" opacity="0.5"/><rect x="1823.0" y="158.0" width="1.0" height="1.5" fill="#6a9955" opacity="0.5"/><rect x="1801.0" y="160.0" width="1.0" height="1.5" fill="#6a9955" opacity="0.5"/><rect x="1812.0" y="160.0" width="13.0" height="1.5" fill="#6a9955" opacity="0.5"/><rect x="1826.0" y="160.0" width="1.0" height="1.5" fill="#6a9955" opacity="0.5"/><rect x="1801.0" y="162.0" width="1.0" height="1.5" fill="#6a9955" opacity="0.5"/><rect x="1812.0" y="162.0" width="25.0" height="1.5" fill="#6a9955" opacity="0.5"/><rect x="1838.0" y="162.0" width="1.0" height="1.5" fill="#6a9955" opacity="0.5"/><rect x="1801.0" y="164.0" width="1.0" height="1.5" fill="#6a9955" opacity="0.5"/><rect x="1812.0" y="164.0" width="19.0" height="1.5" fill="#6a9955" opacity="0.5"/><rect x="1832.0" y="164.0" width="1.0" height="1.5" fill="#6a9955" opacity="0.5"/><rect x="1801.0" y="166.0" width="1.0" height="1.5" fill="#6a9955" opacity="0.5"/><rect x="1812.0" y="166.0" width="27.0" height="1.5" fill="#6a9955" opacity="0.5"/><rect x="1840.0" y="166.0" width="1.0" height="1.5" fill="#6a9955" opacity="0.5"/><rect x="1801.0" y="168.0" width="1.0" height="1.5" fill="#6a9955" opacity="0.5"/><rect x="1812.0" y="168.0" width="15.0" height="1.5" fill="#6a9955" opacity="0.5"/><rect x="1828.0" y="168.0" width="4.0" height="1.5" fill="#6a9955" opacity="0.5"/></svg>
</body></html>
